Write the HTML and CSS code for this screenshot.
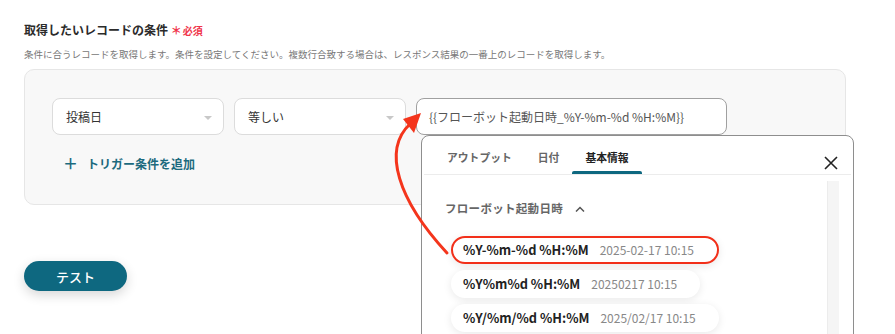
FILE: index.html
```html
<!DOCTYPE html>
<html lang="ja">
<head>
  <meta charset="UTF-8">
  <title>取得したいレコードの条件</title>
  <link rel="stylesheet" href="styles.css">
</head>
<body>

<div class="page">
  <h2 class="title">取得したいレコードの条件 <span class="req"><span class="star">＊</span>必須</span></h2>
  <p class="desc">条件に合うレコードを取得します。条件を設定してください。複数行合致する場合は、レスポンス結果の一番上のレコードを取得します。</p>

  <!-- ========= 条件ボックス ========= -->
  <div class="cond-box">
    <div class="cond-row">
      <div class="select sel-field">投稿日<span class="caret"></span></div>
      <div class="select sel-op">等しい<span class="caret"></span></div>
      <div class="value-input">{{フローボット起動日時_%Y-%m-%d %H:%M}}</div>
    </div>
    <div class="add-link"><span class="plus">＋</span>トリガー条件を追加</div>
  </div>

  <button class="btn-test">テスト</button>
</div>

<!-- ========= 変数ピッカー（ドロップダウン） ========= -->
<div class="picker">
  <div class="picker-tabs">
    <div class="tab">アウトプット</div>
    <div class="tab">日付</div>
    <div class="tab active">基本情報</div>
    <div class="close">
      <svg width="14" height="14" viewBox="0 0 14 14"><path d="M1 1 L13 13 M13 1 L1 13" stroke="#222" stroke-width="1.6" fill="none"/></svg>
    </div>
  </div>
  <div class="picker-body">
    <div class="picker-list">
      <div class="group-head">フローボット起動日時
        <svg class="chev" width="10" height="6" viewBox="0 0 10 6"><path d="M1 5.5 L5 1.5 L9 5.5" stroke="#555" stroke-width="1.5" fill="none"/></svg>
      </div>
      <div class="pill highlight"><b>%Y-%m-%d %H:%M</b><span>2025-02-17 10:15</span></div>
      <div class="pill"><b>%Y%m%d %H:%M</b><span>20250217 10:15</span></div>
      <div class="pill"><b>%Y/%m/%d %H:%M</b><span>2025/02/17 10:15</span></div>
    </div>
    <div class="scroll-track"></div>
  </div>
</div>

<!-- 注釈の矢印 -->
<svg class="annot" width="895" height="334" viewBox="0 0 895 334">
  <path d="M447 253 C398 200 382 150 410 124" stroke="#f4351c" stroke-width="3" fill="none" stroke-linecap="round"/>
  <polygon points="421,113 403,119 414,133" fill="#f4351c"/>
</svg>

</body>
</html>
```

FILE: styles.css
```css
/* ---------- base ---------- */
html, body {
  margin: 0;
  padding: 0;
  background: #ffffff;
  color: #333;
  font-family: "Noto Sans CJK JP", "Noto Sans", sans-serif;
}
body { width: 895px; height: 334px; overflow: hidden; position: relative; }

.page { padding: 21px 49px 0 24px; }

.title { margin: 0; font-size: 12px; line-height: 18px; font-weight: bold; color: #2b2b2b; }
.req { color: #f0344a; font-size: 10px; font-weight: bold; }
.req .star { font-size: 11px; margin-right: 1px; }

.desc { margin: 7px 0 8px; font-size: 9.5px; line-height: 14px; color: #777; }

/* ---------- condition box ---------- */
.cond-box {
  box-sizing: border-box;
  height: 136px;
  padding: 28px 0 0 27px;
  background: #f8f8f8;
  border: 1px solid #e6e6e6;
  border-radius: 10px;
}
.cond-row { display: flex; gap: 10px; }

.select, .value-input {
  box-sizing: border-box;
  height: 37px;
  display: flex;
  align-items: center;
  background: #fff;
  border: 1px solid #dcdcdc;
  border-radius: 8px;
  font-size: 12px;
  color: #333;
}
.select { position: relative; padding-left: 13px; }
.sel-field { width: 172px; }
.sel-op { width: 172px; }
.caret {
  position: absolute; right: 11px; top: 17px;
  border-left: 4px solid transparent; border-right: 4px solid transparent;
  border-top: 4px solid #c8c8c8;
}
.value-input { width: 311px; padding-left: 12px; border-color: #a0a0a0; font-size: 12px; color: #555; }

.add-link { margin-top: 19px; padding-left: 11px; line-height: 18px; font-size: 12px; font-weight: bold; color: #1c6a7e; }
.add-link .plus { font-size: 15px; margin-right: 9px; }

.btn-test {
  margin-top: 56px;
  width: 103px; height: 30px;
  border: 0; border-radius: 15px;
  background: #0e6880;
  color: #fff;
  font-family: inherit; font-size: 13px; font-weight: 500;
  box-shadow: 0 4px 12px rgba(0, 0, 0, 0.16);
}

/* ---------- picker dropdown ---------- */
.picker {
  position: absolute; left: 421px; top: 135px;
  box-sizing: border-box;
  width: 433px; height: 230px;
  background: #fff;
  border: 1px solid #8e8e8e;
  border-radius: 8px;
}
.picker-tabs { display: flex; height: 38px; padding-left: 10px; border-bottom: 1px solid #ececec; margin: 0 2px; }
.tab { position: relative; padding: 0 13px; line-height: 42px; font-size: 10.8px; font-weight: bold; color: #666; }
.tab.active { color: #222; }
.tab.active::after {
  content: ""; position: absolute; left: 0; right: 0; bottom: 0;
  height: 3px; background: #0e6880; border-radius: 2px 2px 0 0;
}
.close { margin-left: auto; padding: 15px 13px 0 0; }

.picker-body { display: flex; }
.picker-list { flex: 1; padding: 25px 0 0 23px; }
.scroll-track { width: 11px; margin: 6px 14px 0 0; background: #f5f5f5; border-left: 1px solid #ececec; height: 200px; }

.group-head { font-size: 11.5px; font-weight: bold; color: #666; letter-spacing: 0.3px; line-height: 16px; }
.group-head .chev { margin-left: 9px; vertical-align: 1px; }

.pill {
  box-sizing: border-box;
  display: table;
  height: 28px; line-height: 28px;
  margin: 6px 0 0 6px;
  padding: 0 23px 0 12px;
  background: #fff;
  border-radius: 14px;
  box-shadow: 0 2px 9px rgba(0, 0, 0, 0.09);
  font-size: 12.8px; color: #222;
}
.group-head + .pill { margin-top: 20px; }
.pill span { margin-left: 11px; font-size: 12px; color: #888; }
.pill.highlight { border: 2.5px solid #f2301a; line-height: 23px; padding-left: 10px; }

.annot { position: absolute; left: 0; top: 0; pointer-events: none; }
```
